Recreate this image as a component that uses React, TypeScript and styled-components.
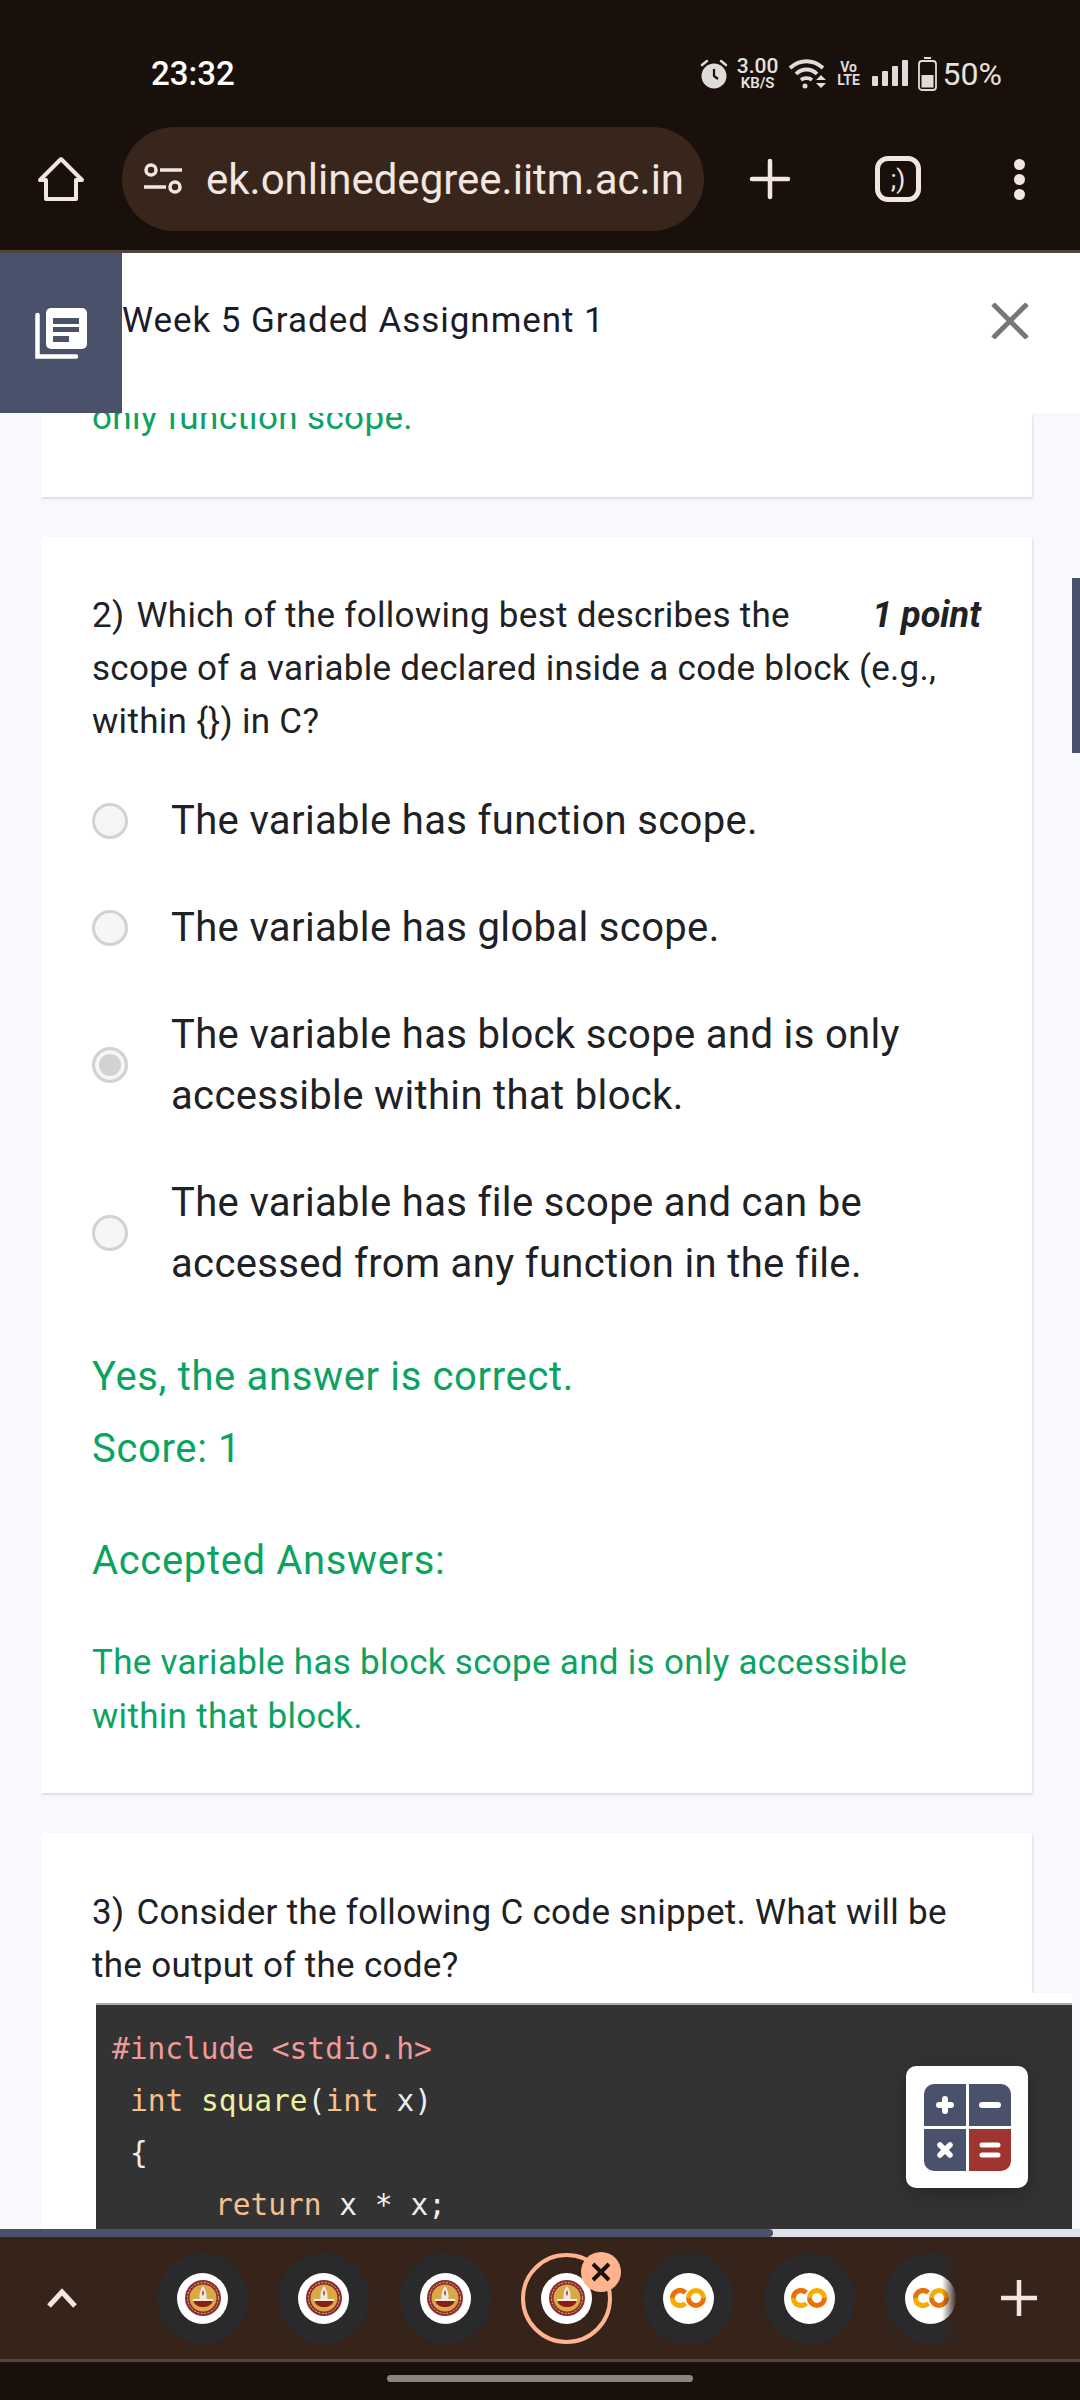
import { createGlobalStyle, styled } from "styled-components";

const GlobalStyle = createGlobalStyle`
  html, body {
    margin: 0;
    padding: 0;
    background: #1a100b;
  }
  * {
    box-sizing: border-box;
  }
`;

const options = [
  { text: "The variable has function scope." },
  { text: "The variable has global scope." },
  { text: "The variable has block scope and is only accessible within that block.", checked: true },
  { text: "The variable has file scope and can be accessed from any function in the file." },
];

const tabs = ["iitm", "iitm", "iitm", "iitm", "colab", "colab", "colab"];

const IitmLogo = () => (
  <svg width="36" height="36" viewBox="0 0 36 36">
    <circle cx="18" cy="18" r="18" fill="#8e2f2c" />
    <circle cx="18" cy="18" r="15.500" fill="none" stroke="#d9b9a0" strokeWidth="1" strokeDasharray="2 1.5" />
    <circle cx="18" cy="18" r="13.500" fill="#d9a945" />
    <path d="M18 6c2.500 3.500 3.500 7 3.500 9v4h-7v-4c0-2 1-5.500 3.500-9z" fill="#eeeae2" />
    <path d="M18 10c1 2 1.200 4 0 6-1.200-2-1-4 0-6z" fill="#a5281f" />
    <path d="M8 19h20v2H8z" fill="#f5efe6" />
    <path d="M8.500 21h19c-1 4-5 6-9.500 6s-8.500-2-9.500-6z" fill="#8c1c16" />
  </svg>
);

const ColabLogo = () => (
  <svg width="36" height="20" viewBox="0 0 36 20" fill="none" strokeWidth="5">
    <path d="M15.300 4.700A7.500 7.500 0 0 0 2.500 10" stroke="#e8710a" />
    <path d="M2.500 10A7.500 7.500 0 0 0 15.300 15.300" stroke="#f9ab00" />
    <path d="M18.500 10A7.500 7.500 0 0 1 33.500 10" stroke="#f9ab00" />
    <path d="M33.500 10A7.500 7.500 0 0 1 18.500 10" stroke="#e8710a" />
  </svg>
);

export default function App() {
  return (
    <Page>
      <GlobalStyle />
      <StatusBar>
        <Clock>23:32</Clock>
        <StatusIcons>
          <svg width="28" height="30" viewBox="0 0 28 30">
            <path d="M2 6l5-4M26 6l-5-4" stroke="#dedbd8" strokeWidth="2.500" strokeLinecap="round" />
            <circle cx="14" cy="17" r="12.500" fill="#dedbd8" />
            <path d="M14 10v7l4 3" stroke="#1a100b" strokeWidth="2.200" fill="none" />
          </svg>
          <Speed>
            <SpeedValue>3.00</SpeedValue>
            <SpeedUnit>KB/S</SpeedUnit>
          </Speed>
          <svg width="38" height="30" viewBox="0 0 38 30" fill="none" stroke="#dedbd8" strokeWidth="3.800">
            <path d="M2 9c10-9 23-9 33 0" />
            <path d="M8 15c6-6 15-6 21 0" />
            <path d="M13 21c3-2.500 8-2.500 11 0" />
            <circle cx="17" cy="27" r="2.500" fill="#dedbd8" stroke="none" />
            <path d="M28 21h10l-5-5zM28 24h10l-5 5z" fill="#dedbd8" stroke="none" />
          </svg>
          <VoLte>
            <span>Vo</span>
            <span>LTE</span>
          </VoLte>
          <svg width="36" height="27" viewBox="0 0 36 27" fill="#dedbd8">
            <rect x="0" y="16" width="6" height="10" rx="1" />
            <rect x="10" y="11" width="6" height="15" rx="1" />
            <rect x="20" y="6" width="6" height="20" rx="1" />
            <rect x="30" y="0" width="6" height="26" rx="1" />
          </svg>
          <BatteryIcon width="19" height="34" viewBox="0 0 19 34">
            <rect x="6" y="0" width="7" height="2" fill="#dedbd8" />
            <rect x="1" y="4" width="17" height="29" rx="3" fill="none" stroke="#dedbd8" strokeWidth="1.800" />
            <rect x="3.500" y="18" width="12" height="12.500" fill="#dedbd8" />
          </BatteryIcon>
          <Battery>50%</Battery>
        </StatusIcons>
      </StatusBar>

      <Toolbar>
        <HomeSlot>
          <svg width="48" height="46" viewBox="0 0 48 46" fill="none" stroke="#f1e6e0" strokeWidth="4" strokeLinejoin="round">
            <path d="M24 3L3 24h6v19h30V24h6z" />
          </svg>
        </HomeSlot>
        <AddressPill>
          <svg width="40" height="32" viewBox="0 0 40 32" fill="none" stroke="#f1e6e0" strokeWidth="3.500">
            <circle cx="8" cy="7" r="5" />
            <path d="M17 7h22M1 24h22" />
            <circle cx="32" cy="24" r="5" />
          </svg>
          <Url>ek.onlinedegree.iitm.ac.in</Url>
        </AddressPill>
        <ToolbarActions>
          <svg width="42" height="42" viewBox="0 0 42 42" stroke="#f1e6e0" strokeWidth="4.500" strokeLinecap="round">
            <path d="M21 3v36M3 21h36" />
          </svg>
          <TabCounter>;)</TabCounter>
          <MenuDots>
            <Dot />
            <Dot />
            <Dot />
          </MenuDots>
        </ToolbarActions>
      </Toolbar>
      <BarLine />

      <AssignmentHeader>
        <HeaderBadge>
          <svg width="52" height="52" viewBox="0 0 52 52" fill="none">
            <path d="M2.500 8v41.500H41" stroke="#fff" strokeWidth="4.500" strokeLinecap="round" />
            <rect x="11" y="1" width="41" height="41" rx="5" fill="#fff" />
            <path d="M18 11h26v6H18zM18 20h26v5H18zM18 29h16v6H18z" fill="#49516b" />
          </svg>
        </HeaderBadge>
        <HeaderTitle>Week 5 Graded Assignment 1</HeaderTitle>
        <CloseSlot>
          <svg width="38" height="36" viewBox="0 0 38 36" stroke="#777" strokeWidth="5">
            <path d="M2 1l34 34M36 1L2 35" />
          </svg>
        </CloseSlot>
      </AssignmentHeader>

      <Content>
        <PreviousCard>
          <PreviousLine>only function scope.</PreviousLine>
        </PreviousCard>

        <Card>
          <Question>
            <Points>1 point</Points>
            <QuestionNumber>2)</QuestionNumber>Which of the following best describes the scope of a variable declared
            inside a code block (e.g., within {"{}"}) in C?
          </Question>
          <OptionList>
            {options.map((option) => (
              <OptionRow key={option.text}>
                <Radio $checked={option.checked} />
                <OptionText>{option.text}</OptionText>
              </OptionRow>
            ))}
          </OptionList>
          <Feedback>Yes, the answer is correct.</Feedback>
          <ScoreLine>Score: 1</ScoreLine>
          <AcceptedTitle>Accepted Answers:</AcceptedTitle>
          <AcceptedAnswer>The variable has block scope and is only accessible within that block.</AcceptedAnswer>
        </Card>

        <OpenCard>
          <Question>
            <QuestionNumber>3)</QuestionNumber>Consider the following C code snippet. What will be the output of the
            code?
          </Question>
          <CodeFrame>
            <CodeBlock>
              <CodeLine>
                <Pink>#include &lt;stdio.h&gt;</Pink>
              </CodeLine>
              <CodeLine $indent={18}>
                <Peach>int</Peach> <Lime>square</Lime>(<Peach>int</Peach> x)
              </CodeLine>
              <CodeLine $indent={18}>{"{"}</CodeLine>
              <CodeLine $indent={103}>
                <Peach>return</Peach> x * x;
              </CodeLine>
            </CodeBlock>
          </CodeFrame>
        </OpenCard>

        <ScrollThumb />
        <CalculatorButton>
          <CalculatorGrid>
            <CalcKey $corner="top-left">
              <svg width="20" height="20" viewBox="0 0 20 20" stroke="#fff" strokeWidth="6" strokeLinecap="round">
                <path d="M10 4v12M4 10h12" />
              </svg>
            </CalcKey>
            <CalcKey $corner="top-right">
              <svg width="22" height="8" viewBox="0 0 22 8" stroke="#fff" strokeWidth="6" strokeLinecap="round">
                <path d="M3 4h16" />
              </svg>
            </CalcKey>
            <CalcKey $corner="bottom-left">
              <svg width="16" height="16" viewBox="0 0 16 16" stroke="#fff" strokeWidth="5.500" strokeLinecap="round">
                <path d="M3 3l10 10M13 3L3 13" />
              </svg>
            </CalcKey>
            <CalcKey $corner="bottom-right" $accent>
              <svg width="22" height="16" viewBox="0 0 22 16" stroke="#fff" strokeWidth="5" strokeLinecap="round">
                <path d="M3 3h16M3 13h16" />
              </svg>
            </CalcKey>
          </CalculatorGrid>
        </CalculatorButton>
      </Content>

      <ProgressTrack>
        <ProgressFill />
      </ProgressTrack>

      <TabBar>
        <ChevronSlot>
          <svg width="32" height="20" viewBox="0 0 32 20" fill="none" stroke="#f1e6e0" strokeWidth="5">
            <path d="M3 18L16 4l13 14" />
          </svg>
        </ChevronSlot>
        <TabStrip>
          {tabs.map((tab, index) => (
            <TabCircle key={index} $selected={index === 3}>
              <Favicon>{tab === "iitm" ? <IitmLogo /> : <ColabLogo />}</Favicon>
              {index === 3 && (
                <TabClose>
                  <svg width="20" height="20" viewBox="0 0 20 20" stroke="#1a100b" strokeWidth="4">
                    <path d="M2 2l16 16M18 2L2 18" />
                  </svg>
                </TabClose>
              )}
            </TabCircle>
          ))}
          <StripFade />
        </TabStrip>
        <NewTabSlot>
          <svg width="38" height="38" viewBox="0 0 38 38" stroke="#f1e6e0" strokeWidth="4.500">
            <path d="M19 1v36M1 19h36" />
          </svg>
        </NewTabSlot>
      </TabBar>
      <BarLine />
      <NavBar>
        <HomeHandle />
      </NavBar>
    </Page>
  );
}

const Page = styled.div`
  width: 1080px;
  height: 2400px;
  display: flex;
  flex-direction: column;
  overflow: hidden;
  font-family: Roboto, "Liberation Sans", sans-serif;
  background: #1a100b;
`;

const StatusBar = styled.div`
  height: 125px;
  flex: none;
  display: flex;
  justify-content: space-between;
  align-items: center;
  padding: 22px 78px 0 151px;
`;

const Clock = styled.span`
  color: #fff;
  font-size: 33px;
  font-weight: 500;
`;

const StatusIcons = styled.div`
  display: flex;
  align-items: center;
`;

const Speed = styled.div`
  width: 44px;
  display: flex;
  flex-direction: column;
  align-items: center;
  margin: 0 8px;
  color: #e4e1de;
  font-weight: 500;
`;

const SpeedValue = styled.span`
  font-size: 21px;
  line-height: 19px;
`;

const SpeedUnit = styled.span`
  font-size: 15px;
  font-weight: 600;
  line-height: 14px;
`;

const VoLte = styled.div`
  width: 22px;
  display: flex;
  flex-direction: column;
  align-items: center;
  margin: 0 12px;
  color: #dedbd8;
  font-size: 14px;
  font-weight: 700;
  line-height: 13px;
`;

const BatteryIcon = styled.svg`
  margin-left: 10px;
`;

const Battery = styled.span`
  margin-left: 6px;
  color: #e4e1de;
  font-size: 32px;
`;

const Toolbar = styled.div`
  height: 125px;
  flex: none;
  display: flex;
  align-items: flex-start;
  padding-top: 2px;
`;

const HomeSlot = styled.div`
  width: 122px;
  height: 104px;
  flex: none;
  display: flex;
  justify-content: center;
  align-items: center;
`;

const AddressPill = styled.div`
  width: 582px;
  height: 104px;
  flex: none;
  display: flex;
  align-items: center;
  gap: 23px;
  padding-left: 21px;
  border-radius: 52px;
  background: #38261c;
`;

const Url = styled.span`
  color: #f1e6e0;
  font-size: 42px;
  white-space: nowrap;
`;

const ToolbarActions = styled.div`
  flex: 1;
  height: 104px;
  display: flex;
  align-items: center;
  padding-left: 45px;
  gap: 82px;
`;

const TabCounter = styled.div`
  width: 46px;
  height: 46px;
  flex: none;
  display: flex;
  justify-content: center;
  align-items: center;
  margin-left: 2px;
  border: 5px solid #f1e6e0;
  border-radius: 13px;
  color: #f1e6e0;
  font-size: 26px;
`;

const MenuDots = styled.div`
  display: flex;
  flex-direction: column;
  gap: 4px;
  margin-left: 11px;
`;

const Dot = styled.span`
  width: 11px;
  height: 11px;
  border-radius: 50%;
  background: #f1e6e0;
`;

const BarLine = styled.div`
  height: 3px;
  flex: none;
  background: #51453e;
`;

const AssignmentHeader = styled.div`
  height: 160px;
  flex: none;
  display: flex;
  align-items: center;
  background: #fff;
`;

const HeaderBadge = styled.div`
  width: 122px;
  height: 100%;
  flex: none;
  display: flex;
  justify-content: center;
  align-items: center;
  background: #49516b;
`;

const HeaderTitle = styled.div`
  flex: 1;
  margin-bottom: 25px;
  color: #1b1c2a;
  font-size: 35px;
  letter-spacing: 0.95px;
`;

const CloseSlot = styled.div`
  display: flex;
  padding: 0 51px 25px 0;
`;

const Content = styled.div`
  flex: 1;
  min-height: 0;
  position: relative;
  display: flex;
  flex-direction: column;
  gap: 40px;
  padding: 0 48px 0 41px;
  overflow: hidden;
  background: #f8f9fd;
`;

const PreviousCard = styled.div`
  height: 84px;
  flex: none;
  padding: 0 51px;
  background: #fff;
  box-shadow: 1px 2px 2px #dcdde2;
`;

const PreviousLine = styled.div`
  margin-top: -22px;
  color: #0ba360;
  font-size: 35px;
  letter-spacing: 0.35px;
  line-height: 54px;
`;

const Card = styled.div`
  flex: none;
  padding: 52px 51px 49px;
  background: #fff;
  box-shadow: 1px 2px 2px #dcdde2;
`;

const OpenCard = styled(Card)`
  flex: 1;
  padding-top: 53px;
  padding-bottom: 0;
`;

const Question = styled.div`
  color: #202124;
  font-size: 35px;
  letter-spacing: 0.3px;
  line-height: 53px;
`;

const QuestionNumber = styled.span`
  margin-right: 12px;
`;

const Points = styled.span`
  float: right;
  font-size: 36px;
  font-weight: 700;
  font-style: italic;
  letter-spacing: 0;
`;

const OptionList = styled.div`
  display: flex;
  flex-direction: column;
  gap: 46px;
  margin-top: 42px;
`;

const OptionRow = styled.div`
  display: flex;
  align-items: center;
`;

const Radio = styled.span<{ $checked?: boolean }>`
  width: 36px;
  height: 36px;
  flex: none;
  margin-right: 43px;
  border: 3px solid #d2d2d2;
  border-radius: 50%;
  background: ${(p) => (p.$checked ? "#d2d2d2" : "#f6f6f6")};
  box-shadow: ${(p) => (p.$checked ? "inset 0 0 0 4px #f6f6f6" : "none")};
`;

const OptionText = styled.span`
  color: #202124;
  font-size: 40px;
  letter-spacing: 0.35px;
  line-height: 61px;
`;

const Feedback = styled.div`
  margin-top: 53px;
  color: #0ba360;
  font-size: 40px;
  letter-spacing: 0.65px;
  line-height: 60px;
`;

const ScoreLine = styled(Feedback)`
  margin-top: 12px;
`;

const AcceptedTitle = styled(Feedback)`
  margin-top: 52px;
`;

const AcceptedAnswer = styled.div`
  margin-top: 45px;
  color: #0ba360;
  font-size: 35px;
  letter-spacing: 0.3px;
  line-height: 54px;
`;

const CodeFrame = styled.div`
  margin: 1px -91px 0 0;
  padding: 10px 0 0 4px;
  background: #fff;
`;

const CodeBlock = styled.div`
  height: 240px;
  padding: 18px 0 0 16px;
  border-top: 2px solid #a9a9a9;
  background: #333;
  color: #eee;
  font-family: "DejaVu Sans Mono", monospace;
  font-size: 29.5px;
  line-height: 52px;
`;

const CodeLine = styled.div<{ $indent?: number }>`
  padding-left: ${(p) => p.$indent ?? 0}px;
  white-space: pre;
`;

const Pink = styled.span`
  color: #ef9a9a;
`;

const Peach = styled.span`
  color: #f6c08d;
`;

const Lime = styled.span`
  color: #eef0a0;
`;

const ScrollThumb = styled.div`
  position: absolute;
  top: 165px;
  right: 0;
  width: 8px;
  height: 175px;
  background: #49516b;
`;

const CalculatorButton = styled.div`
  position: absolute;
  top: 1653px;
  left: 906px;
  width: 122px;
  height: 122px;
  display: flex;
  justify-content: center;
  align-items: center;
  border-radius: 10px;
  background: #fff;
  box-shadow: 0 6px 24px rgba(0, 0, 0, 0.25);
`;

const CalculatorGrid = styled.div`
  width: 87px;
  height: 87px;
  display: grid;
  grid-template-columns: 1fr 1fr;
  grid-template-rows: 1fr 1fr;
  gap: 3px;
`;

const cornerRadius: Record<string, string> = {
  "top-left": "10px 0 0 0",
  "top-right": "0 10px 0 0",
  "bottom-left": "0 0 0 10px",
  "bottom-right": "0 0 10px 0",
};

const CalcKey = styled.div<{ $corner: string; $accent?: boolean }>`
  display: flex;
  justify-content: center;
  align-items: center;
  border-radius: ${(p) => cornerRadius[p.$corner]};
  background: ${(p) => (p.$accent ? "#a0342e" : "#49516b")};
`;

const ProgressTrack = styled.div`
  height: 8px;
  flex: none;
  background: #dfe1ea;
`;

const ProgressFill = styled.div`
  width: 773px;
  height: 100%;
  border-radius: 0 6px 6px 0;
  background: #49516b;
`;

const TabBar = styled.div`
  height: 122px;
  flex: none;
  display: flex;
  align-items: center;
  background: #36231a;
`;

const ChevronSlot = styled.div`
  width: 157px;
  flex: none;
  display: flex;
  justify-content: center;
  padding-right: 34px;
`;

const TabStrip = styled.div`
  width: 800px;
  height: 100%;
  flex: none;
  position: relative;
  display: flex;
  align-items: center;
  gap: 30.4px;
  overflow: hidden;
`;

const TabCircle = styled.div<{ $selected?: boolean }>`
  width: 91px;
  height: 91px;
  flex: none;
  position: relative;
  display: flex;
  justify-content: center;
  align-items: center;
  border-radius: 50%;
  background: ${(p) => (p.$selected ? "transparent" : "#2a2a2c")};
  border: ${(p) => (p.$selected ? "4px solid #ffb48f" : "none")};
`;

const Favicon = styled.div`
  width: 51px;
  height: 51px;
  flex: none;
  display: flex;
  justify-content: center;
  align-items: center;
  border-radius: 50%;
  background: #fff;
`;

const TabClose = styled.div`
  position: absolute;
  top: -5px;
  right: -13px;
  width: 40px;
  height: 40px;
  display: flex;
  justify-content: center;
  align-items: center;
  border-radius: 50%;
  background: #ffb48f;
`;

const StripFade = styled.div`
  position: absolute;
  top: 0;
  right: 0;
  width: 15px;
  height: 100%;
  background: linear-gradient(to right, rgba(54, 35, 26, 0), #36231a);
`;

const NewTabSlot = styled.div`
  flex: 1;
  display: flex;
  justify-content: center;
`;

const NavBar = styled.div`
  height: 38px;
  flex: none;
  display: flex;
  justify-content: center;
  padding-top: 13px;
  background: #1a100b;
`;

const HomeHandle = styled.div`
  width: 306px;
  height: 7px;
  border-radius: 4px;
  background: #8a8580;
`;
